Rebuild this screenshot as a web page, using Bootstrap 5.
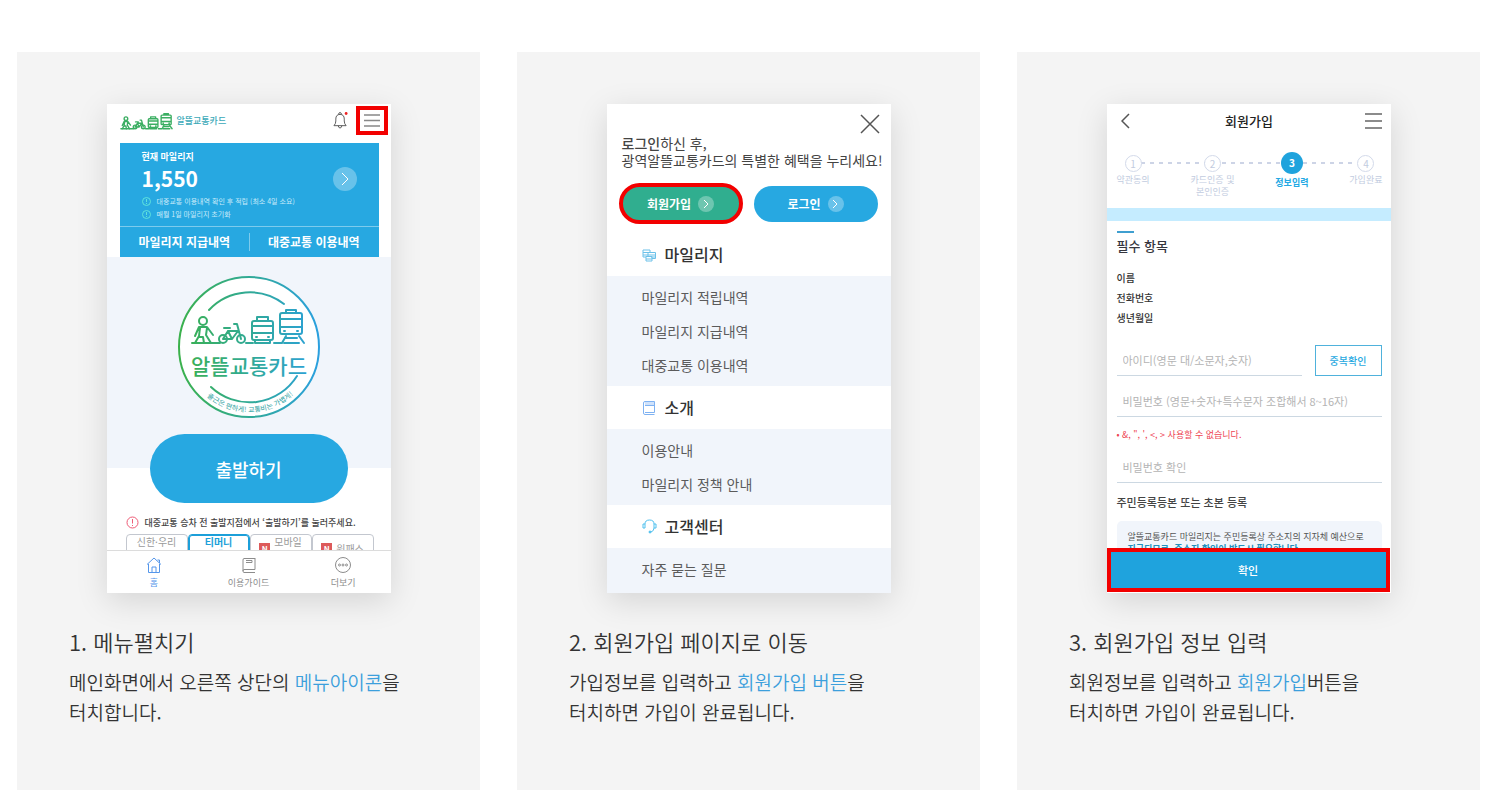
<!DOCTYPE html>
<html lang="ko">
<head>
<meta charset="utf-8">
<meta name="viewport" content="width=device-width, initial-scale=1">
<title>알뜰교통카드 회원가입 안내</title>
<link href="https://cdn.jsdelivr.net/npm/bootstrap@5.3.0/dist/css/bootstrap.min.css" rel="stylesheet">
<style>
  :root { --sky: #27a8e1; --pale: #f1f5fb; --mark: #f20000; }
  body { font-family: "Noto Sans CJK KR", sans-serif; color: #333; background: #fff; word-break: keep-all; }
  a { text-decoration: none; color: inherit; }
  svg { display: block; flex: none; fill: none; }
  button { font-family: inherit; }

  .guide { padding: 52px 13px 11px 17px; }
  .steps-grid { gap: 37px; grid-template-columns: repeat(3, minmax(0, 1fr)); }
  @media (max-width: 1100px) { .steps-grid { grid-template-columns: minmax(0, 1fr); } }
  .step-card { background: #f4f4f4; padding: 52px 52px 63px; }
  .step-title { font-size: 22px; line-height: 32px; font-weight: 350; margin: 32px 0 10px; }
  .step-text { font-size: 19px; line-height: 30px; font-weight: 350; margin: 0; }
  .step-title, .step-text { font-family: "Noto Sans CJK KR DemiLight", "Noto Sans CJK KR", sans-serif; }
  .step-text em { font-style: normal; color: #3c9fdc; }

  .phone { width: 284px; max-width: 100%; aspect-ratio: 284 / 489; min-height: 0; background: #fff; box-shadow: 0 8px 30px rgba(0,0,0,.13); line-height: 1; }
  .screen { min-height: 0; flex: 1 1 0; }
  .hit { border: 4px solid var(--mark); }
  .disc { width: 16px; height: 16px; border-radius: 50%; background: rgba(255,255,255,.3); display: flex; align-items: center; justify-content: center; flex: none; }
  .disc-lg { width: 24px; height: 24px; }

  /* 1: home */
  .home-head { height: 39px; padding: 0 3px 6px 13px; }
  .brand-name { font-size: 9px; font-weight: 500; color: #3aa9b8; }
  .menu-btn { width: 32px; height: 29px; padding: 0; background: #fff; }
  .mileage { background: var(--sky); color: #fff; margin: 0 12px 0 13px; }
  .mileage-main { padding: 9px 22px 0; height: 83px; }
  .mileage-label { font-size: 9px; line-height: 10px; font-weight: 700; }
  .mileage-sum { font-size: 21px; line-height: 33px; font-weight: 700; }
  .mileage-note { font-size: 7px; line-height: 13px; color: #c9ebfa; white-space: nowrap; gap: 6px; }
  .mileage-links { height: 31px; border-top: 1px solid #7dcbed; font-size: 12px; font-weight: 700; }
  .mileage-links a + a::before { content: ""; position: absolute; left: 0; top: 6px; bottom: 6px; border-left: 1px solid #7dcbed; }
  .hero { background: linear-gradient(var(--pale) 211px, #fff 211px); padding-top: 19px; }
  .depart { width: 198px; height: 69px; border: 0; border-radius: 35px; background: var(--sky); color: #fff; font-size: 18px; font-weight: 500; margin-top: 16px; }
  .notice { font-size: 9px; line-height: 13px; color: #444; padding: 13px 0 0 19px; font-weight: 500; white-space: nowrap; gap: 6px; }
  .card-tabs { padding: 5px 17px 0 19px; }
  .card-tabs button { flex: 1; border: 1px solid #c3c7cf; border-radius: 4px; height: 28px; background: #fff; color: #9a9a9a; font-size: 10px; line-height: 13px; padding: 0; }
  .card-tabs .on { border: 1px solid #1c9fd9; box-shadow: 0 0 0 1px #1c9fd9 inset; color: #1c9fd9; font-weight: 700; }
  .n-badge { background: #dd5a5a; color: #fff; font-size: 8px; font-weight: 700; width: 11px; height: 11px; line-height: 11px; text-align: center; }
  .tab-bar { height: 43px; border-top: 1px solid #dcdcdc; background: #fff; font-size: 9px; line-height: 12px; color: #8c8c8c; padding: 6px 0 0; }
  .tab-bar .on { color: #5596ea; }

  /* 2: menu */
  .menu-head { height: 172px; }
  .menu-close { padding: 10px 11px 0 0; }
  .greet { font-size: 14px; line-height: 17px; padding: 1px 0 0 15px; white-space: nowrap; color: #444; }
  .greet b { font-weight: 500; }
  .pill { flex: 0 1 50%; height: 36px; border: 0; border-radius: 21px; font-size: 12px; font-weight: 700; color: #fff; background: var(--sky); padding: 0; gap: 7px; }
  .pill.hit { height: 41px; border: 4px solid var(--mark); background: #30ae8f; }
  .pill-row { padding: 14px 13px 0 12px; gap: 11px; }
  .menu-title { font-size: 16px; font-weight: 500; height: 43px; padding-left: 35px; gap: 8px; margin: 0; }
  .menu-list { background: var(--pale); padding: 4px 0 4px 35px; margin: 0; font-size: 14px; line-height: 34px; color: #5b5b5b; }

  /* 3: form */
  .join-head { height: 34px; padding: 0 9px 0 14px; }
  .back { width: 13px; }
  .join-title { font-size: 13px; font-weight: 500; margin: 0; color: #222; }
  .progress-list { padding: 14px 8px 0 10px; margin: 0; height: 70px; font-size: 9px; line-height: 12px; color: #c2cce0; text-align: center; }
  .progress-list::before { content: ""; position: absolute; left: 34px; right: 34px; top: 24px; height: 2px; background: repeating-linear-gradient(90deg, #cdd4e6 0 4px, transparent 4px 9px); }
  .progress-list li { position: relative; display: flex; flex-direction: column; align-items: center; white-space: nowrap; }
  .num { width: 17px; height: 17px; border: 1px solid #d3daea; border-radius: 50%; background: #fff; line-height: 16px; margin: 3px 0 2px; font-size: 10px; }
  .now { color: #23a9e4; font-weight: 700; }
  .now .num { width: 22px; height: 22px; border: 0; background: #1fa3dd; color: #fff; line-height: 22px; margin: 0 0 3px; }
  .band { height: 13px; background: #c5ecff; }
  .join-body { padding: 10px 9px 0 10px; }
  .accent { width: 17px; height: 2px; background: #3f9fd0; }
  .group-title { font-size: 13px; line-height: 19px; font-weight: 500; color: #36363e; margin: 3px 0 13px; }
  .facts { font-size: 10px; line-height: 20px; font-weight: 500; margin: 0 0 17px; color: #333; }
  .id-row { gap: 13px; margin-bottom: 10px; }
  .line-input { font-size: 11px; height: 31px; width: 100%; border: 0; border-bottom: 1px solid #ccd8e2; padding: 0 6px; border-radius: 0; background: transparent; min-width: 0; }
  .line-input::placeholder { color: #b4b4b4; opacity: 1; }
  .check-btn { width: 67px; height: 31px; border: 1px solid #4fb2dc; background: #fff; color: #28a9e1; font-size: 10px; font-weight: 500; padding: 0; flex: none; }
  .warn { font-size: 9px; line-height: 13px; color: #ee4452; margin: 11px 0 11px; }
  .doc-title { font-size: 11px; line-height: 16px; font-weight: 500; color: #444; margin: 11px 0 11px; }
  .info { background: var(--pale); border-radius: 5px; padding: 10px 0 10px 11px; font-size: 9px; line-height: 12px; color: #555; white-space: nowrap; }
  .info strong { color: #2290bd; }
  .confirm { height: 44px; margin-right: 1px; margin-bottom: 1px; background: #1fa3dd; color: #fff; font-size: 11px; font-weight: 500; padding: 0; }
</style>
</head>
<body>
<svg width="0" height="0" class="position-absolute" aria-hidden="true">
  <defs>
    <linearGradient id="brand" gradientUnits="userSpaceOnUse" x1="0" y1="0" x2="142" y2="0">
      <stop offset="0" stop-color="#3bb14a"/><stop offset=".5" stop-color="#31aa96"/><stop offset="1" stop-color="#2ba0e0"/>
    </linearGradient>
    <g id="travel" stroke-linecap="round" stroke-linejoin="round">
      <!-- walker -->
      <circle cx="25" cy="45" r="4"/>
      <path d="M21 51 H29 L35 59 M21 51 L17 60 M22 52 L21 60 L17 67 H14 M29 52 L28 59 L33 67 M21 61 L25 61 L26 67"/>
      <path d="M17 67 H42 M68 67 H75 M96 67 H104 L108 60"/>
      <!-- bicycle -->
      <circle cx="45" cy="63" r="4"/><circle cx="63" cy="63" r="4"/>
      <path d="M45 63 L50 55 L60 55 L54 63 H45 M50 55 L54 63 M56 48 H59 L63 63 M46 52 H52"/>
      <!-- bus -->
      <path d="M76 45 H93 Q95 45 95 47 V62 Q95 64 93 64 H76 Q74 64 74 62 V47 Q74 45 76 45 M74 50 H95 M74 57 H95 M79 45 V41 H90 V45 M77 64 V67 H92 V64 M78 61 H79 M90 61 H91"/>
      <!-- train -->
      <path d="M104 37 H122 Q124 37 124 39 V56 Q124 58 122 58 H104 Q102 58 102 56 V39 Q102 37 104 37 M102 43 H124 M102 51 H124 M108 37 V34 H118 V37 M106 55 H107 M119 55 H120 M107 62 H119 M106 67 H121 M121 60 L126 67"/>
    </g>
  </defs>
</svg>

<main class="guide">
  <div class="steps-grid d-grid">

    <section class="step-card">
      <div class="phone mx-auto d-flex flex-column">
        <header class="home-head d-flex align-items-center">
          <a href="#" class="d-flex align-items-center gap-1" aria-label="알뜰교통카드">
            <svg width="53" height="18" viewBox="12 31 116 38" stroke="#3bae62" stroke-width="3"><use href="#travel"/></svg>
            <span class="brand-name">알뜰교통카드</span>
          </a>
          <svg class="ms-auto me-2" width="15" height="19" viewBox="0 0 16 19" stroke="#555" stroke-width="1"><path d="M1 15 H14 Q12 13 12 10 V8 Q12 3 7.500 3 Q3 3 3 8 V10 Q3 13 1 15 Z M6 3 Q6 1 7.500 1 Q9 1 9 3 M5.500 15 Q6 17.500 7.500 17.500 Q9 17.500 9.500 15"/><circle cx="14" cy="2" r="1.500" fill="#e22" stroke="none"/></svg>
          <button class="menu-btn hit d-flex align-items-center justify-content-center" aria-label="메뉴">
            <svg width="16" height="13" viewBox="0 0 16 13" stroke="#888" stroke-width="1.500"><path d="M0 1 H16 M0 6.500 H16 M0 12 H16"/></svg>
          </button>
        </header>
        <div class="screen overflow-hidden">
          <div class="mileage">
            <div class="mileage-main">
              <div class="mileage-label">현재 마일리지</div>
              <div class="d-flex align-items-center justify-content-between">
                <span class="mileage-sum">1,550</span>
                <a href="#" class="disc disc-lg" aria-label="자세히"><svg width="8" height="14" viewBox="0 0 8 14" stroke="#fff"><path d="M1 1 L7 7 L1 13"/></svg></a>
              </div>
              <div class="mileage-note d-flex align-items-center"><svg width="9" height="9" viewBox="0 0 9 9" stroke="#5fe3dc"><circle cx="4.500" cy="4.500" r="4"/><path d="M4.500 2 V5 M4.500 6 V7"/></svg><span>대중교통 이용내역 확인 후 적립 (최소 4일 소요)</span></div>
              <div class="mileage-note d-flex align-items-center"><svg width="9" height="9" viewBox="0 0 9 9" stroke="#5fe3dc"><circle cx="4.500" cy="4.500" r="4"/><path d="M4.500 2 V5 M4.500 6 V7"/></svg><span>매월 1일 마일리지 초기화</span></div>
            </div>
            <div class="mileage-links d-flex text-center align-items-stretch">
              <a href="#" class="flex-fill w-50 d-flex align-items-center justify-content-center">마일리지 지급내역</a>
              <a href="#" class="flex-fill w-50 d-flex align-items-center justify-content-center position-relative">대중교통 이용내역</a>
            </div>
          </div>
          <div class="hero d-flex flex-column align-items-center">
            <svg width="142" height="142" viewBox="0 0 142 142" stroke="url(#brand)" stroke-width="2" role="img" aria-label="알뜰교통카드 로고">
              <circle cx="71" cy="71" r="70" fill="#fff"/>
              <path d="M31 34 A56 56 0 0 1 106 28 M33 111 A56 56 0 0 0 119 100" stroke-linecap="round"/>
              <use href="#travel"/>
              <text x="71" y="98" text-anchor="middle" font-size="21" font-weight="500" fill="url(#brand)" stroke="none">알뜰교통카드</text>
              <path id="arc" d="M24 116 A65 65 0 0 0 120 114" stroke="none"/>
              <text font-size="7" fill="#30a3a3" stroke="none" text-anchor="middle"><textPath href="#arc" startOffset="50%">출근은 편하게! 교통비는 가볍게!</textPath></text>
            </svg>
            <button class="depart">출발하기</button>
          </div>
          <div class="notice d-flex align-items-center">
            <svg width="13" height="13" viewBox="0 0 13 13" stroke="#ee5b76"><circle cx="6.500" cy="6.500" r="5.500"/><path d="M6.500 3 V7.500 M6.500 9 V10"/></svg>
            <span>대중교통 승차 전 출발지점에서 ‘출발하기’를 눌러주세요.</span>
          </div>
          <div class="card-tabs d-flex">
            <button>신한·우리<br>하나카드</button>
            <button class="on">티머니<br>페이앱카드</button>
            <button class="d-flex align-items-center justify-content-center gap-1"><span class="n-badge">N</span><span>모바일<br>캐시비</span></button>
            <button class="d-flex align-items-center justify-content-center gap-1"><span class="n-badge">N</span><span>원패스</span></button>
          </div>
        </div>
        <nav class="tab-bar d-flex text-center">
          <a href="#" class="on flex-fill w-100 d-flex flex-column align-items-center gap-1"><svg width="16" height="16" viewBox="0 0 16 16" stroke="currentColor"><path d="M1 7.500 L8 1 L15 7.500 M2.500 7 V15.500 H13.500 V7 M6 15 V10 H10 V15 M11.500 3 H13.500 V6"/></svg><span>홈</span></a>
          <a href="#" class="flex-fill w-100 d-flex flex-column align-items-center gap-1"><svg width="16" height="16" viewBox="0 0 16 16" stroke="currentColor"><path d="M14 1.500 H3 Q2 1.500 2 3 V14 Q2 15.500 3 15.500 H14 M14 1 V12.500 H3 Q2 12.500 2 14 M5 5.500 H11 M5 3.500 H11 V5.500"/></svg><span>이용가이드</span></a>
          <a href="#" class="flex-fill w-100 d-flex flex-column align-items-center gap-1"><svg width="16" height="16" viewBox="0 0 16 16" stroke="currentColor"><circle cx="8" cy="8" r="7.500"/><circle cx="4.500" cy="8" r="1"/><circle cx="8" cy="8" r="1"/><circle cx="11.500" cy="8" r="1"/></svg><span>더보기</span></a>
        </nav>
      </div>
      <h2 class="step-title">1. 메뉴펼치기</h2>
      <p class="step-text">메인화면에서 오른쪽 상단의 <em>메뉴아이콘</em>을<br>터치합니다.</p>
    </section>

    <section class="step-card">
      <div class="phone mx-auto d-flex flex-column">
        <div class="menu-head d-flex flex-column">
          <a href="#" class="menu-close ms-auto" aria-label="닫기"><svg width="20" height="20" viewBox="0 0 20 20" stroke="#555" stroke-width="1.500"><path d="M1 1 L19 19 M19 1 L1 19"/></svg></a>
          <div class="greet"><b>로그인</b>하신 후,<br>광역알뜰교통카드의 특별한 혜택을 누리세요!</div>
          <div class="pill-row d-flex align-items-center">
            <button class="pill hit d-flex align-items-center justify-content-center">회원가입<span class="disc"><svg width="5" height="10" viewBox="0 0 5 10" stroke="#fff"><path d="M0 1 L4 5 L0 9"/></svg></span></button>
            <button class="pill d-flex align-items-center justify-content-center">로그인<span class="disc"><svg width="5" height="10" viewBox="0 0 5 10" stroke="#fff"><path d="M0 1 L4 5 L0 9"/></svg></span></button>
          </div>
          <h3 class="menu-title mt-auto d-flex align-items-center"><svg width="15" height="14" viewBox="0 0 15 14" stroke="#6cc1e9" stroke-width="1"><path d="M1 2 H8 V4 M1 2 V9 H4 M1 4.500 H6 M1 7 H6 M6 4.500 H13.500 V10.500 H10 M6 4.500 V8 M6 7 H13.500 M9 9 H13.500 M4 8.500 H10 V13 H4 Z M4 11 H10"/></svg>마일리지</h3>
        </div>
        <ul class="menu-list list-unstyled"><li><a href="#">마일리지 적립내역</a></li><li><a href="#">마일리지 지급내역</a></li><li><a href="#">대중교통 이용내역</a></li></ul>
        <h3 class="menu-title d-flex align-items-center"><svg width="15" height="14" viewBox="0 0 15 14" stroke="#7fb2f2"><path d="M3 1 H12 V4 H3 Z" fill="#cfe2fb" stroke="none"/><path d="M12.500 .5 H3 Q1.500 .5 1.500 2 V12 Q1.500 13.500 3 13.500 H12.500 M12.500 .5 V11.500 H3 M3 4.500 H12"/></svg>소개</h3>
        <ul class="menu-list list-unstyled"><li><a href="#">이용안내</a></li><li><a href="#">마일리지 정책 안내</a></li></ul>
        <h3 class="menu-title d-flex align-items-center"><svg width="15" height="15" viewBox="0 0 15 15" stroke="#4fc0ee"><path d="M3 5 Q3 1 7.500 1 Q12 1 12 5 M3 5 H1 V9 H3 Z M12 5 H14 V9 H12 Z M12 9 Q12 12 9 13"/><circle cx="8" cy="13" r="1" fill="#4fc0ee"/></svg>고객센터</h3>
        <ul class="menu-list list-unstyled flex-fill"><li><a href="#">자주 묻는 질문</a></li></ul>
      </div>
      <h2 class="step-title">2. 회원가입 페이지로 이동</h2>
      <p class="step-text">가입정보를 입력하고 <em>회원가입 버튼</em>을<br>터치하면 가입이 완료됩니다.</p>
    </section>

    <section class="step-card">
      <div class="phone mx-auto d-flex flex-column">
        <header class="join-head d-flex align-items-center justify-content-between">
          <a href="#" class="back" aria-label="뒤로"><svg width="9" height="16" viewBox="0 0 9 16" stroke="#555" stroke-width="1.500"><path d="M8 1 L1 8 L8 15"/></svg></a>
          <h3 class="join-title">회원가입</h3>
          <a href="#" aria-label="메뉴"><svg width="17" height="16" viewBox="0 0 17 16" stroke="#666" stroke-width="1.500"><path d="M0 1 H17 M0 8 H17 M0 15 H17"/></svg></a>
        </header>
        <ol class="progress-list list-unstyled d-flex justify-content-between position-relative">
          <li><span class="num">1</span>약관동의</li>
          <li><span class="num">2</span>카드인증 및<br>본인인증</li>
          <li class="now"><span class="num">3</span>정보입력</li>
          <li><span class="num">4</span>가입완료</li>
        </ol>
        <div class="band"></div>
        <form class="screen overflow-hidden join-body">
          <div class="accent"></div>
          <h4 class="group-title">필수 항목</h4>
          <ul class="facts list-unstyled"><li>이름</li><li>전화번호</li><li>생년월일</li></ul>
          <div class="id-row d-flex">
            <input class="line-input" type="text" aria-label="아이디" placeholder="아이디(영문 대/소문자,숫자)">
            <button type="button" class="check-btn">중복확인</button>
          </div>
          <input class="line-input" type="text" aria-label="비밀번호" placeholder="비밀번호 (영문+숫자+특수문자 조합해서 8~16자)">
          <p class="warn">• &amp;, ", ', &lt;, &gt; 사용할 수 없습니다.</p>
          <input class="line-input" type="text" aria-label="비밀번호 확인" placeholder="비밀번호 확인">
          <h4 class="doc-title">주민등록등본 또는 초본 등록</h4>
          <div class="info">알뜰교통카드 마일리지는 주민등록상 주소지의 지자체 예산으로<br><strong>지급되므로, 주소지 확인이 반드시 필요합니다.</strong></div>
        </form>
        <button class="confirm hit">확인</button>
      </div>
      <h2 class="step-title">3. 회원가입 정보 입력</h2>
      <p class="step-text">회원정보를 입력하고 <em>회원가입</em>버튼을<br>터치하면 가입이 완료됩니다.</p>
    </section>

  </div>
</main>
<script src="https://cdn.jsdelivr.net/npm/bootstrap@5.3.0/dist/js/bootstrap.bundle.min.js"></script>
</body>
</html>
